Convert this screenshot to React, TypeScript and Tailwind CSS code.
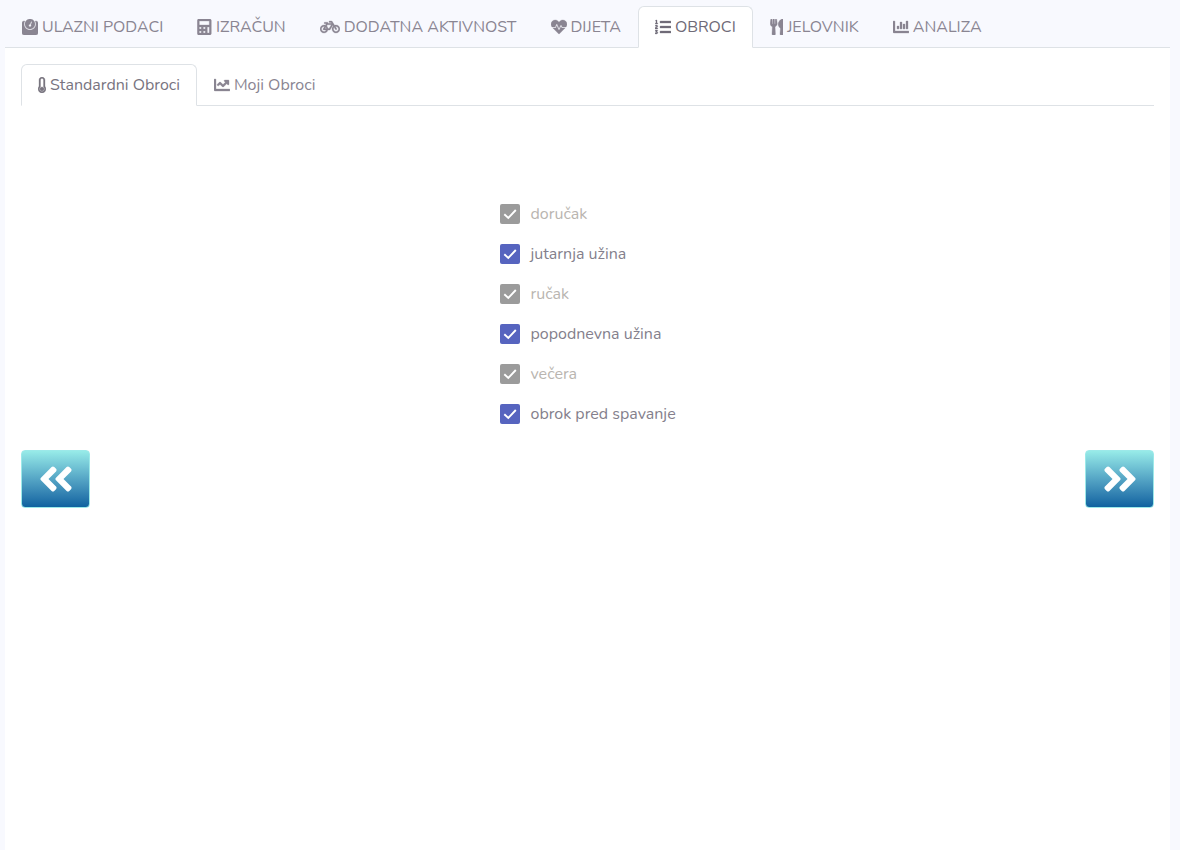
import { FaWeight, FaCalculator, FaBicycle, FaHeartbeat, FaListOl, FaUtensils, FaChartBar, FaChartLine, FaThermometerEmpty, FaAngleDoubleLeft, FaAngleDoubleRight } from "react-icons/fa";
import type { ComponentType } from "react";

const font = "font-['Nunito','Lato','Noto_Sans',sans-serif]";

const tabs: { label: string; icon: ComponentType<{ className?: string }>; w: string; active?: boolean }[] = [
  { label: "ULAZNI PODACI", icon: FaWeight, w: "w-4" },
  { label: "IZRAČUN", icon: FaCalculator, w: "w-[14.6px]" },
  { label: "DODATNA AKTIVNOST", icon: FaBicycle, w: "w-5" },
  { label: "DIJETA", icon: FaHeartbeat, w: "w-4" },
  { label: "OBROCI", icon: FaListOl, w: "w-4", active: true },
  { label: "JELOVNIK", icon: FaUtensils, w: "w-[13.4px]" },
  { label: "ANALIZA", icon: FaChartBar, w: "w-4" },
];

const meals = [
  { label: "doručak", disabled: true },
  { label: "jutarnja užina" },
  { label: "ručak", disabled: true },
  { label: "popodnevna užina" },
  { label: "večera", disabled: true },
  { label: "obrok pred spavanje" },
];

function ArrowButton({ dir }: { dir: "left" | "right" }) {
  const Icon = dir === "left" ? FaAngleDoubleLeft : FaAngleDoubleRight;
  return (
    <button className="flex h-[58px] w-[69px] items-center justify-center rounded-[4px] border border-[#9ce9e9] bg-gradient-to-b from-[#97ebe8] to-[#0f62a0] text-white">
      <Icon className="h-[40px] w-[40px]" />
    </button>
  );
}

export default function App() {
  return (
    <div className={`min-h-[850px] bg-[#f8f9fe] text-[#8a8592] ${font}`}>
      <div className="mx-[5px] w-[1165px]">
        <div className="flex h-[48px] items-end border-b border-[#dee2e6]">
          {tabs.map((t) => (
            <div
              key={t.label}
              className={`-mb-px flex h-[42px] items-center gap-1 rounded-t-[6px] border px-4 text-[16px] ${
                t.active
                  ? "border-[#dee2e6] border-b-white bg-white text-[#6f6b78]"
                  : "border-transparent"
              }`}
            >
              <t.icon className={`h-4 shrink-0 stroke-[10] ${t.w}`} />
              {t.label}
            </div>
          ))}
        </div>
        <div className="h-[802px] bg-white px-4 pt-4">
          <div className="flex h-[42px] items-end border-b border-[#dee2e6]">
            <div className="-mb-px flex h-[42px] items-center gap-1 rounded-t-[6px] border border-[#dee2e6] border-b-white bg-white px-4 text-[16px] text-[#78747f]">
              <FaThermometerEmpty className="h-4 w-2 stroke-[10]" />
              Standardni Obroci
            </div>
            <div className="-mb-px flex h-[42px] items-center gap-1 border border-transparent px-4 text-[16px]">
              <FaChartLine className="h-4 w-4 stroke-[10]" />
              Moji Obroci
            </div>
          </div>
          <div className="ml-[479px] flex flex-col gap-5 pt-[98px]">
            {meals.map((m) => (
              <div key={m.label} className="flex h-5 items-center gap-[10.5px] text-[16px]">
                <span
                  className={`flex h-5 w-5 items-center justify-center rounded-[2px] ${
                    m.disabled ? "bg-[#9b9b9b]" : "bg-[#5664bf]"
                  }`}
                >
                  <svg viewBox="0 0 20 20" className="h-5 w-5" fill="none" stroke="white" strokeWidth="1.9">
                    <path d="M4.3 10.3 L8.3 14 L15.8 6" />
                  </svg>
                </span>
                <span className={m.disabled ? "text-[#b9b5b0]" : "text-[#847f8c]"}>{m.label}</span>
              </div>
            ))}
          </div>
          <div className="mt-[26px] flex justify-between">
            <ArrowButton dir="left" />
            <ArrowButton dir="right" />
          </div>
        </div>
      </div>
    </div>
  );
}
